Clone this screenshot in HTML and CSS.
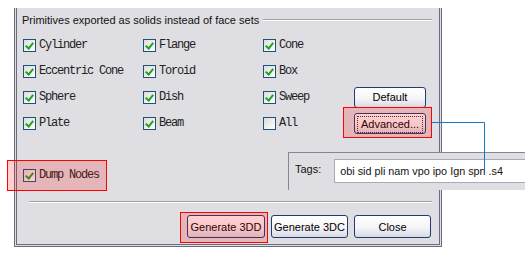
FILE: index.html
```html
<!DOCTYPE html>
<html>
<head>
    <title>Export 3D options</title>
    <link rel="stylesheet" href="styles.css">
</head>
<body>
    <div class="page">
        <div class="dialog">
            <div class="group-title">
                <span>Primitives exported as solids instead of face sets</span>
                <div class="etched"></div>
            </div>

            <div class="options">
                <label class="check"><span class="box on"></span>Cylinder</label>
                <label class="check"><span class="box on"></span>Flange</label>
                <label class="check"><span class="box on"></span>Cone</label>
                <span></span>

                <label class="check"><span class="box on"></span>Eccentric Cone</label>
                <label class="check"><span class="box on"></span>Toroid</label>
                <label class="check"><span class="box on"></span>Box</label>
                <span></span>

                <label class="check"><span class="box on"></span>Sphere</label>
                <label class="check"><span class="box on"></span>Dish</label>
                <label class="check"><span class="box on"></span>Sweep</label>
                <button class="btn">Default</button>

                <label class="check"><span class="box on"></span>Plate</label>
                <label class="check"><span class="box on"></span>Beam</label>
                <label class="check"><span class="box"></span>All</label>
                <button class="btn btn-focus"><span>Advanced...</span></button>
            </div>

            <div class="dump">
                <label class="check"><span class="box on"></span>Dump Nodes</label>
            </div>

            <div class="etched sep"></div>

            <div class="actions">
                <button class="btn btn-wide">Generate 3DD</button>
                <button class="btn btn-wide">Generate 3DC</button>
                <button class="btn btn-wide">Close</button>
            </div>
        </div>

        <!-- floating tags panel -->
        <div class="tags-panel">
            <span class="tags-label">Tags:</span>
            <div class="tags-input">obi sid pli nam vpo ipo Ign spn .s4</div>
        </div>

        <!-- annotation marks -->
        <div class="mark mark-adv"></div>
        <div class="mark mark-dump"></div>
        <div class="mark mark-3dd"></div>

        <svg class="connector" width="531" height="258">
            <polyline points="432,122.5 484.5,122.5 484.5,171" fill="none" stroke="#1677c4" stroke-width="1"/>
        </svg>
    </div>
</body>
</html>
```

FILE: styles.css
```css
body { margin: 0; background: #fff; font-family: "Liberation Sans", Arial, sans-serif; font-size: 11px; color: #111; }
.page { position: relative; width: 531px; height: 258px; overflow: hidden; }

.dialog { margin: 8px 0 0 14px; width: 422px; height: 236px; background: #dfdee3; border: 3px double #6a697d; border-top: none; display: flex; flex-direction: column; }

.group-title { display: flex; align-items: center; gap: 4px; height: 14px; margin: 5px 7px 0 5px; }
.group-title span { white-space: nowrap; }
.group-title .etched { flex: 1; }
.etched { border-top: 1px solid #a3a2aa; border-bottom: 1px solid #fff; }

.options { display: grid; grid-template-columns: 120px 120px 91px 72px; grid-auto-rows: 26px; margin: 5px 0 0 6px; }
.check { display: flex; align-items: center; gap: 3px; font-family: "Liberation Mono", "Courier New", monospace; font-size: 12px; letter-spacing: -1.2px; color: #222; white-space: nowrap; }
.box { width: 11px; height: 11px; border: 1px solid #1c5180; background: linear-gradient(135deg, #dcdcd7, #fff); position: relative; flex: none; margin-right: 0; }
.box.on::after { content: ""; position: absolute; left: 3px; top: 1px; width: 3px; height: 6px; border: solid #21a121; border-width: 0 2px 2px 0; transform: rotate(40deg); }

.btn { font-family: "Liberation Sans", Arial, sans-serif; font-size: 11px; color: #000; border: 1px solid #1f3d6e; border-radius: 3px; background: linear-gradient(#fff 0%, #f5f5f7 55%, #d9d9e3 100%); padding: 0; height: 21px; width: 72px; align-self: center; }
.btn-focus { padding: 2px; }
.btn-focus span { display: block; height: 15px; line-height: 15px; border: 1px dotted #333; }

.dump { margin: 29px 0 0 6px; height: 20px; display: flex; }
.sep { margin: 16px 7px 0 12px; }

.actions { display: flex; justify-content: flex-end; gap: 6px; margin: 12px 8px 0 0; }
.btn-wide { width: 77px; height: 23px; }
.btn-wide:first-child { width: 78px; }

.tags-panel { position: absolute; left: 288px; top: 152px; width: 237px; height: 38px; background: #dfdee3; border-top: 1px solid #85849a; border-left: 1px solid #85849a; display: flex; align-items: flex-start; gap: 13px; padding: 6px 0 0 6px; box-sizing: border-box; overflow: hidden; }
.tags-label { margin-top: 4px; }
.tags-input { flex: none; width: 220px; height: 24px; box-sizing: border-box; background: #fff; border: 1px solid #a5acb8; padding: 0 0 0 5px; line-height: 22px; font-size: 10.8px; white-space: nowrap; }

.mark { position: absolute; border: 1px solid #f00; background: rgba(255, 0, 0, 0.18); box-sizing: border-box; }
.mark-adv { left: 343px; top: 107px; width: 89px; height: 31px; }
.mark-dump { left: 7px; top: 160px; width: 100px; height: 31px; }
.mark-3dd { left: 180px; top: 212px; width: 88px; height: 31px; }

.connector { position: absolute; left: 0; top: 0; pointer-events: none; }
```
